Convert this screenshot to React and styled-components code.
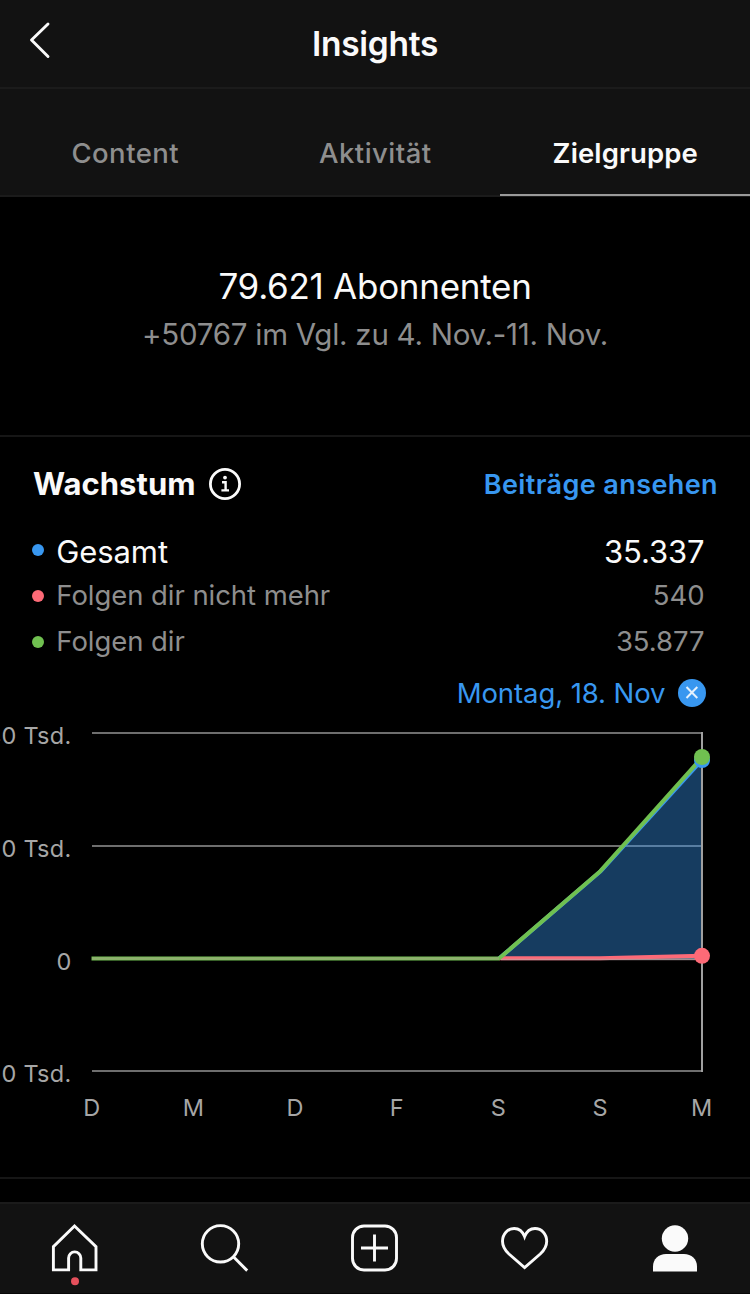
import React from "react";
import styled, { createGlobalStyle } from "styled-components";

const GlobalStyle = createGlobalStyle`
  *, *::before, *::after { box-sizing: border-box; }
  body {
    margin: 0;
    background: #000;
    color: #fafafa;
    font-family: Inter, Roboto, "Liberation Sans", sans-serif;
    overflow: hidden;
  }
`;

const Screen = styled.div`
  display: flex;
  flex-direction: column;
  width: 750px;
  height: 1294px;
  overflow: hidden;
  background: #000;
`;

const Header = styled.header`
  display: grid;
  grid-template-columns: 80px 1fr 80px;
  align-items: center;
  height: 89px;
  flex: none;
  background: #121212;
  border-bottom: 2px solid #1b1b1b;
`;

const BackButton = styled.button`
  display: flex;
  width: 80px;
  height: 87px;
  padding: 0;
  border: 0;
  background: none;
`;

const Title = styled.h1`
  margin: 0;
  text-align: center;
  font-size: 33.5px;
  font-weight: 600;
  letter-spacing: -0.28px;
  line-height: 40px;
`;

const Tabs = styled.nav`
  display: grid;
  grid-template-columns: repeat(3, 1fr);
  height: 108px;
  flex: none;
  background: #121212;
  box-shadow: inset 0 -2px 0 #1b1b1b;
`;

const Tab = styled.a`
  display: flex;
  align-items: center;
  justify-content: center;
  height: 107px;
  padding: 22px 0 0 0.6px;
  border-bottom: 2px solid ${(p) => (p.$active ? "#9a9a9a" : "transparent")};
  color: ${(p) => (p.$active ? "#fafafa" : "#8e8e8e")};
  font-size: 27.5px;
  font-weight: ${(p) => (p.$active ? 600 : 500)};
  letter-spacing: ${(p) => (p.$active ? "0.13px" : "0.47px")};
`;

const Summary = styled.section`
  height: 240px;
  flex: none;
  padding-top: 65px;
  text-align: center;
  border-bottom: 2px solid #161616;
`;

const Followers = styled.div`
  font-size: 35px;
  line-height: 48px;
  letter-spacing: -0.27px;
`;

const Comparison = styled.div`
  color: #8e8e8e;
  font-size: 29.5px;
  line-height: 48px;
  letter-spacing: -0.26px;
`;

const Growth = styled.section`
  display: flex;
  flex-direction: column;
  height: 742px;
  flex: none;
  border-bottom: 2px solid #161616;
`;

const GrowthHeader = styled.div`
  display: flex;
  align-items: center;
  justify-content: space-between;
  height: 90px;
  padding: 4px 32px 0 33px;
`;

const GrowthTitle = styled.h2`
  display: flex;
  align-items: center;
  gap: 12.5px;
  margin: 0;
  font-size: 31px;
  font-weight: 700;
  letter-spacing: 0.05px;
  line-height: 34px;
`;

const PostsLink = styled.a`
  color: #3897f0;
  font-size: 27px;
  font-weight: 600;
  letter-spacing: 0.4px;
`;

const LegendRow = styled.div`
  display: flex;
  align-items: center;
  height: 46px;
  padding: 0 45.5px 0 32px;
  color: ${(p) => (p.$total ? "#fafafa" : "#8e8e8e")};
  font-size: ${(p) => (p.$total ? 31 : 27.5)}px;
  letter-spacing: ${(p) => (p.$total ? -0.1 : -0.06)}px;
  line-height: 40px;
`;

const Dot = styled.span`
  width: 12px;
  height: 12px;
  margin-right: 12.3px;
  border-radius: 50%;
  background: ${(p) => p.$color};
`;

const LegendText = styled.span`
  padding-bottom: ${(p) => (p.$total ? 0 : 2)}px;
  padding-top: ${(p) => (p.$total ? 3 : 0)}px;
`;

const LegendValue = styled(LegendText)`
  margin-left: auto;
`;

const DateRow = styled.div`
  display: flex;
  align-items: center;
  justify-content: flex-end;
  gap: 12.5px;
  height: 56px;
  padding-right: 44px;
  color: #3897f0;
  font-size: 27.5px;
  letter-spacing: -0.08px;
`;

const Chart = styled.svg`
  display: block;
  width: 750px;
  height: 456px;
`;

const AxisLabel = styled.text`
  fill: #a6a6a6;
  font-size: 23.5px;
  letter-spacing: ${(p) => (p.textAnchor === "end" ? 0.27 : 0)}px;
`;

const Icon = styled.svg`
  display: block;
  flex: none;
  fill: none;
  stroke: ${(p) => p.$stroke || "#fafafa"};
  stroke-width: ${(p) => p.$weight || 2.9}px;
`;

const BottomBar = styled.nav`
  display: grid;
  grid-template-columns: repeat(5, 1fr);
  height: 92px;
  margin-top: auto;
  flex: none;
  background: #121212;
  border-top: 2px solid #1b1b1b;
  border-bottom: 1px solid #080808;
`;

const BarItem = styled.a`
  display: flex;
  justify-content: center;
`;

const legend = [
  { label: "Gesamt", value: "35.337", color: "#3897f0", total: true },
  { label: "Folgen dir nicht mehr", value: "540", color: "#fd6a77" },
  { label: "Folgen dir", value: "35.877", color: "#70c050" },
];

const yTicks = [
  { label: "40 Tsd.", y: 733 },
  { label: "20 Tsd.", y: 846 },
  { label: "0", y: 959 },
  { label: "-20 Tsd.", y: 1071 },
];

const days = ["D", "M", "D", "F", "S", "S", "M"];

function GrowthChart() {
  return (
    <Chart viewBox="0 721 750 456">
      {yTicks.map(({ label, y }) => (
        <g key={label}>
          <line x1="92" x2="702" y1={y} y2={y} stroke="#6e6e6e" strokeWidth="2" />
          <AxisLabel x="71.5" y={y + 10.6} textAnchor="end">{label}</AxisLabel>
        </g>
      ))}
      <path d="M499 958.5 600.3 872 702 760V958.5Z" fill="#3897f0" fillOpacity="0.4" />
      <line x1="702" x2="702" y1="732" y2="1072" stroke="#a0a0a0" strokeWidth="2" />
      <g fill="none" strokeWidth="4" strokeLinejoin="round">
        <path d="M499 958.5 600.3 871.6 702 760" stroke="#3897f0" />
        <path d="M499 958.3H600L702 955.8" stroke="#fd6a77" />
        <path d="M91.5 958.5H499L600.3 871.2 702 757.5" stroke="#70c050" />
      </g>
      <line x1="92" x2="499" y1="958.5" y2="958.5" stroke="#b0a090" strokeWidth="2.4" strokeOpacity="0.5" />
      <line x1="501" x2="695" y1="959.5" y2="959.5" stroke="#c0a0a4" strokeWidth="1.4" strokeOpacity="0.65" />
      <circle cx="702" cy="760" r="8" fill="#3897f0" />
      <circle cx="702" cy="757" r="8" fill="#70c050" />
      <circle cx="702" cy="955.8" r="8" fill="#fd6a77" />
      {days.map((day, i) => (
        <AxisLabel key={i} x={91.7 + i * 101.65} y="1115.6" textAnchor="middle">{day}</AxisLabel>
      ))}
    </Chart>
  );
}

export default function App() {
  return (
    <Screen>
      <GlobalStyle />
      <Header>
        <BackButton aria-label="Zurück">
          <Icon width="80" height="87" strokeLinecap="round" strokeLinejoin="round">
            <path d="M48 24 31.5 40 48 56.5" />
          </Icon>
        </BackButton>
        <Title>Insights</Title>
      </Header>
      <Tabs>
        <Tab>Content</Tab>
        <Tab>Aktivität</Tab>
        <Tab $active>Zielgruppe</Tab>
      </Tabs>
      <Summary>
        <Followers>79.621 Abonnenten</Followers>
        <Comparison>+50767 im Vgl. zu 4. Nov.-11. Nov.</Comparison>
      </Summary>
      <Growth>
        <GrowthHeader>
          <GrowthTitle>
            Wachstum
            <Icon width="34" height="34" $weight={2.8}>
              <circle cx="17" cy="17" r="14.6" />
              <circle cx="17" cy="10.6" r="1.9" fill="#fafafa" stroke="none" />
              <path d="M14 15.2H17.6V23.4M13.4 23.4H21" strokeWidth="2.4" />
            </Icon>
          </GrowthTitle>
          <PostsLink>Beiträge ansehen</PostsLink>
        </GrowthHeader>
        {legend.map(({ label, value, color, total }) => (
          <LegendRow key={label} $total={total}>
            <Dot $color={color} />
            <LegendText $total={total}>{label}</LegendText>
            <LegendValue $total={total}>{value}</LegendValue>
          </LegendRow>
        ))}
        <DateRow>
          Montag, 18. Nov
          <Icon width="28" height="28" $stroke="#e4f1fd" $weight={2}>
            <circle cx="14" cy="14" r="14" fill="#3897f0" stroke="none" />
            <path d="M8.5 8 19.3 19M19.3 8 8.5 19" />
          </Icon>
        </DateRow>
        <GrowthChart />
      </Growth>
      <BottomBar>
        <BarItem aria-label="Startseite">
          <Icon width="60" height="89" viewBox="45 1204 60 89">
            <path d="M74.5 1226 53.4 1246.6V1269.9H68.6V1258A6.1 6.1 0 0 1 80.8 1258V1269.9H96V1246.6Z" />
            <circle cx="75" cy="1281.3" r="4" fill="#e5505c" stroke="none" />
          </Icon>
        </BarItem>
        <BarItem aria-label="Suche">
          <Icon width="60" height="89" viewBox="195 1204 60 89">
            <circle cx="220.5" cy="1243.8" r="18.2" />
            <path d="M233.4 1256.8 247.2 1270.6" />
          </Icon>
        </BarItem>
        <BarItem aria-label="Neuer Beitrag">
          <Icon width="60" height="89" viewBox="345 1204 60 89">
            <rect x="352.5" y="1226" width="44" height="44" rx="11.5" />
            <path d="M361 1248H388M374.5 1234.5V1261.5" />
          </Icon>
        </BarItem>
        <BarItem aria-label="Aktivität">
          <Icon width="60" height="89" viewBox="495 1204 60 89" strokeLinejoin="miter">
            <path d="M524.6 1236.6C522.6 1231.4 518.8 1228.5 514.2 1228.5C507.6 1228.5 502.5 1234 502.5 1241.2C502.5 1246.4 505 1250.3 509 1254L524.6 1267.5 540.2 1254C544.2 1250.3 546.7 1246.4 546.7 1241.2C546.7 1234 541.6 1228.5 535 1228.5C530.4 1228.5 526.6 1231.4 524.6 1236.6Z" />
          </Icon>
        </BarItem>
        <BarItem aria-label="Profil">
          <Icon width="60" height="89" viewBox="645 1204 60 89">
            <circle cx="675" cy="1238.5" r="13.2" fill="#fafafa" stroke="none" />
            <path d="M653 1271.5V1266.5C653 1259 658.5 1254 666 1254H684C691.5 1254 697 1259 697 1266.5V1271.5Z" fill="#fafafa" stroke="none" />
          </Icon>
        </BarItem>
      </BottomBar>
    </Screen>
  );
}
